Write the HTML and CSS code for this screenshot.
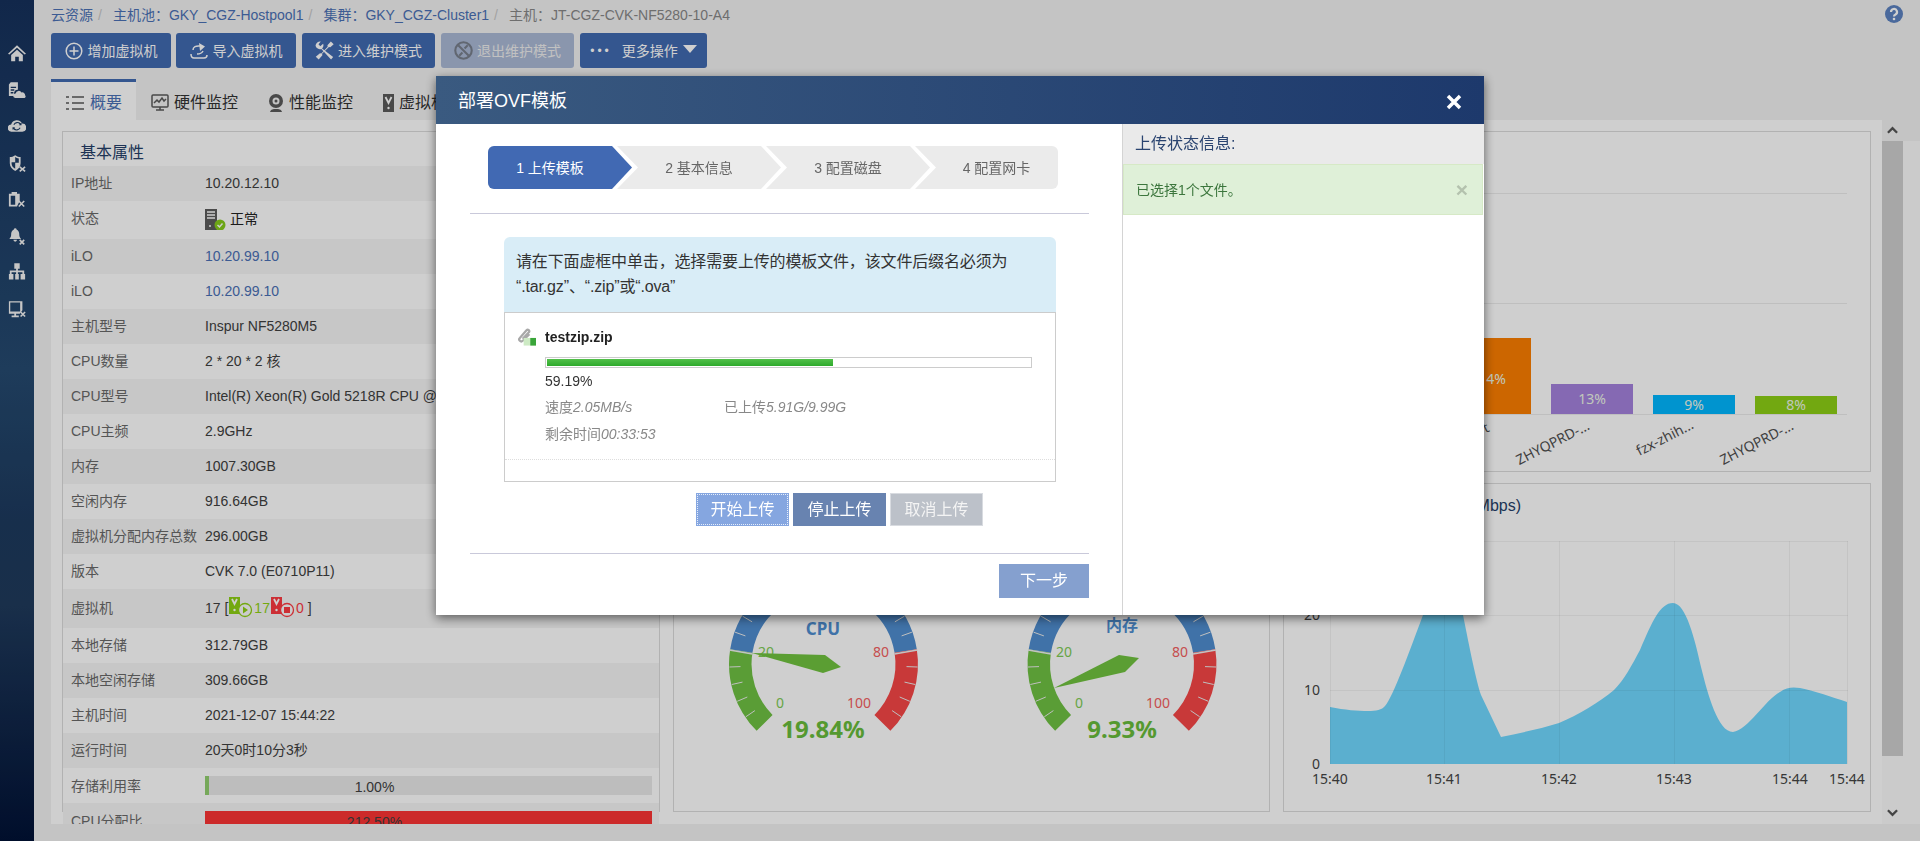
FILE: index.html
```html
<!DOCTYPE html>
<html lang="zh-CN">
<head>
<meta charset="utf-8">
<title>部署OVF模板</title>
<link rel="stylesheet" href="styles.css">
</head>
<body>
<div class="page">
  <aside class="sidebar">
    <svg class="side-icon" viewBox="0 0 20 20"><path d="M0 10.500 10 1l10 9.500-1.500 1L10 4 1.500 11.500zM3.500 12 10 6l6.500 6v7H12v-5H8v5H3.500z"/></svg>
    <svg class="side-icon" viewBox="0 0 20 20"><path d="M1 3.500 3 1h8v8.500a4 4 0 0 0-3 7H1zM3 6v1.500h6V6zm0 3v1.500h4V9zm0 3v1.500h3V12z"/><path d="M8 18.500a2.500 2.500 0 0 1 .5-5 3.500 3.500 0 0 1 6.500-1 3 3 0 0 1 4 3 2 2 0 0 1-.5 3z"/></svg>
    <svg class="side-icon" viewBox="0 0 20 20"><path fill-rule="evenodd" d="M4 16a4 4 0 0 1-.5-8A6.500 6.500 0 0 1 15.500 7 4.500 4.500 0 0 1 16 16zM7 8.500a3.500 3.500 0 0 1 6-.5l-1 1h3V6l-1 .8A5 5 0 0 0 6 8zm6 3a3.500 3.500 0 0 1-6 .5l1-1H5v3l1-.8a5 5 0 0 0 8-1.200z"/></svg>
    <svg class="side-icon" viewBox="0 0 20 20"><path fill-rule="evenodd" d="M8 1c2 1.500 4 2 6 2v7c0 4-2.500 6.500-6 8.500C4.500 16.500 2 14 2 10V3c2 0 4-.5 6-2zM8 3v6H4v1.500c.2 2.500 1.600 4.300 4 5.700V9.500h4V4.600C10.500 4.500 9.200 3.900 8 3z"/><path class="side-x" d="m13 14 6 5m0-5-6 5"/></svg>
    <svg class="side-icon" viewBox="0 0 20 20"><path fill-rule="evenodd" d="M1 4h3V2h6v2h3v8l-3 6H1zm2 2v10h5V6z"/><path class="side-x" d="m12 12 6 6m0-6-6 6"/></svg>
    <svg class="side-icon" viewBox="0 0 20 20"><path d="M8 1a1.500 1.500 0 0 1 1.500 1.500C12 3.500 12.500 6 12.500 8c0 2.500.8 3.500 2 5H1.500c1.200-1.500 2-2.500 2-5 0-2 .5-4.500 3-5.500A1.500 1.500 0 0 1 8 1zM6 14h4a2 2 0 0 1-4 0z"/><path class="side-x" d="m13 14 5 5m0-5-5 5"/></svg>
    <svg class="side-icon" viewBox="0 0 20 20"><path d="M7 0h6v6h-2v2h7v4h1v6h-5v-6h2v-2h-5v2h1v6H8v-6h1v-2H4v2h2v6H1v-6h1V8h7V6H7z"/></svg>
    <svg class="side-icon" viewBox="0 0 20 20"><path fill-rule="evenodd" d="M1 1h15v10l-3 4H9v2h3v2H4v-2h3v-2H1zm1.500 1.500v10h11v-10z"/><path class="side-x" d="m14 13 5 5m0-5-5 5"/></svg>
  </aside>

  <main class="content">
    <div class="topline">
      <nav class="crumbs">
        <span>云资源</span><i>/</i><span>主机池&#xFF1A;GKY_CGZ-Hostpool1</span><i>/</i><span>集群&#xFF1A;GKY_CGZ-Cluster1</span><i>/</i><span class="crumb-current">主机&#xFF1A;JT-CGZ-CVK-NF5280-10-A4</span>
      </nav>
      <svg class="help" viewBox="0 0 18 18"><circle cx="9" cy="9" r="9"/><path class="help-q" d="M6 7a3 3 0 1 1 4.500 2.500C9.500 10 9 10.500 9 11.500"/><circle class="help-dot" cx="9" cy="14" r="1.300"/></svg>
    </div>

    <div class="toolbar">
      <button class="tool tool-a"><svg class="tool-icon" viewBox="0 0 18 18"><circle class="ln" cx="9" cy="9" r="7.800"/><path class="ln" d="M9 4.500v9M4.500 9h9"/></svg>增加虚拟机</button>
      <button class="tool tool-a"><svg class="tool-icon" viewBox="0 0 18 18"><path class="ln" d="M1 12c0 3 1 4 3 4h10c2 0 3-1 3-3"/><path class="ln" d="M3 8c0-3 3-4.500 7-4"/><path d="M9 1l6 3.500L10 9z" fill="#fff"/><path class="ln" d="M7 12c3 0 5-1 6-3"/></svg>导入虚拟机</button>
      <button class="tool tool-b"><svg class="tool-icon tool-icon-lg" viewBox="0 0 18 18"><path d="M.5 4.500A4.300 4.300 0 0 1 5.500.5L3.300 3 5 5l2.700-2.300a4.300 4.300 0 0 1-1 4.500l10.500 8-2 2.300-9.200-10A4.300 4.300 0 0 1 .5 4.500z" fill="#fff"/><path d="M15 .5l2.700 2.500-3.200 3-1.300-.3L6.700 12l.3 1.500L3.500 17.500.7 15l4-3.500 1.300.4 6-6.400-.2-1.400z" fill="#fff"/></svg>进入维护模式</button>
      <button class="tool tool-b tool-off"><svg class="tool-icon tool-icon-lg" viewBox="0 0 18 18"><circle class="ln-off" cx="9" cy="9" r="7.800"/><path class="ln-off" d="M4 4l10 10M13 4l-3 3M5 14l3-3"/></svg>退出维护模式</button>
      <button class="tool tool-c"><span class="dots">•••</span>更多操作<span class="caret"></span></button>
    </div>

    <div class="tabs">
      <div class="tab tab-on"><svg class="tab-icon" viewBox="0 0 18 16"><path class="tab-ln" d="M0 2h3M6 2h12M0 8h3M6 8h12M0 14h3M6 14h12"/></svg>概要</div>
      <div class="tab"><svg class="tab-icon" viewBox="0 0 18 18"><rect x="1" y="1" width="16" height="12" rx="1" class="tab-ln2"/><path class="tab-ln2" d="M3 9l3-3 2 2 3-4 2 3 2-2M5 16h8M9 13v3"/></svg>硬件监控</div>
      <div class="tab"><svg class="tab-icon tab-icon-cam" viewBox="0 0 16 18"><circle cx="8" cy="7" r="7" fill="#5a5a5a"/><circle cx="8" cy="7" r="3.500" fill="#f2f2f2"/><circle cx="8" cy="7" r="1.500" fill="#5a5a5a"/><path d="M2 18c1-3 3-3 6-3s5 0 6 3z" fill="#5a5a5a"/></svg>性能监控</div>
      <div class="tab"><svg class="tab-icon tab-icon-vm" viewBox="0 0 11 18"><rect width="11" height="18" fill="#5a5a5a"/><path d="M2.500 3l3 6 3-6" fill="none" stroke="#fff" stroke-width="1.800"/><circle cx="5.500" cy="14" r="1.200" fill="#fff"/></svg>虚拟机</div>
    </div>

    <div class="workspace">
      <section class="panel">
        <div class="card card-props">
          <h3 class="card-title">基本属性</h3>
          <div class="row"><span class="k">IP地址</span><span class="v">10.20.12.10</span></div>
          <div class="row row-tall"><span class="k k-up">状态</span><span class="v v-state"><svg class="state-icon" viewBox="0 0 21 21"><path d="M0 0h12v21H0z" fill="#5d5d5d"/><path d="M2 3h8M2 6h8M2 9h8" stroke="#fff" stroke-width="1.500"/><circle cx="5" cy="17" r="1" fill="#fff"/><circle cx="15" cy="16" r="5.500" fill="#86cc1c"/><path d="M12.500 16l2 2 3-3.500" stroke="#fff" stroke-width="1.500" fill="none"/></svg>正常</span></div>
          <div class="row"><span class="k">iLO</span><span class="v v-link">10.20.99.10</span></div>
          <div class="row"><span class="k">iLO</span><span class="v v-link">10.20.99.10</span></div>
          <div class="row"><span class="k">主机型号</span><span class="v">Inspur NF5280M5</span></div>
          <div class="row"><span class="k">CPU数量</span><span class="v">2 * 20 * 2 核</span></div>
          <div class="row"><span class="k">CPU型号</span><span class="v">Intel(R) Xeon(R) Gold 5218R CPU @ 2.10GHz</span></div>
          <div class="row"><span class="k">CPU主频</span><span class="v">2.9GHz</span></div>
          <div class="row"><span class="k">内存</span><span class="v">1007.30GB</span></div>
          <div class="row"><span class="k">空闲内存</span><span class="v">916.64GB</span></div>
          <div class="row"><span class="k">虚拟机分配内存总数</span><span class="v">296.00GB</span></div>
          <div class="row"><span class="k">版本</span><span class="v">CVK 7.0 (E0710P11)</span></div>
          <div class="row row-tall2"><span class="k">虚拟机</span><span class="v v-vms">17 [<svg class="vm-icon" viewBox="0 0 24 21"><rect width="11" height="17" fill="#8ed014"/><path d="M3 2l2.500 5L8 2" stroke="#fff" stroke-width="1.800" fill="none"/><circle cx="5.500" cy="13" r="1.200" fill="#fff"/><circle cx="16" cy="13" r="6.500" fill="#fbfbfb" stroke="#8ed014" stroke-width="1.300"/><path d="M14 9.500v7l5-3.500z" fill="#8ed014"/></svg><em class="vm-on">17</em><svg class="vm-icon" viewBox="0 0 24 21"><rect width="11" height="17" fill="#fc3a42"/><path d="M3 2l2.500 5L8 2" stroke="#fff" stroke-width="1.800" fill="none"/><circle cx="5.500" cy="13" r="1.200" fill="#fff"/><circle cx="16" cy="13" r="6.500" fill="#fbfbfb" stroke="#fc3a42" stroke-width="1.300"/><rect x="13" y="10" width="6" height="6" fill="#fc3a42"/></svg><em class="vm-off">0</em>]</span></div>
          <div class="row"><span class="k">本地存储</span><span class="v">312.79GB</span></div>
          <div class="row"><span class="k">本地空闲存储</span><span class="v">309.66GB</span></div>
          <div class="row"><span class="k">主机时间</span><span class="v">2021-12-07 15:44:22</span></div>
          <div class="row"><span class="k">运行时间</span><span class="v">20天0时10分3秒</span></div>
          <div class="row row-meter"><span class="k">存储利用率</span><div class="meter"><div class="meter-fill meter-ok" style="width:1%"></div><span class="meter-text">1.00%</span></div></div>
          <div class="row row-meter"><span class="k">CPU分配比</span><div class="meter"><div class="meter-fill meter-bad" style="width:100%"></div><span class="meter-text">212.50%</span></div></div>
        </div>

        <div class="charts">
          <div class="card card-bars">
            <svg class="chart" viewBox="674 132 1196 339">
              <path class="grid-soft" d="M1100 193.500h747M1100 303.500h747"/>
              <rect x="1100" y="338" width="431" height="76" fill="#fc7e00"/>
              <rect x="1551" y="384" width="82" height="30" fill="#a482dd"/>
              <rect x="1653" y="395" width="82" height="19" fill="#00b7ff"/>
              <rect x="1755" y="396" width="82" height="18" fill="#8dcf16"/>
              <path class="grid-soft" d="M1100 414.500h747"/>
              <text class="bar-val" x="1492" y="384">14%</text>
              <text class="bar-val" x="1592" y="404">13%</text>
              <text class="bar-val" x="1694" y="410">9%</text>
              <text class="bar-val" x="1796" y="410">8%</text>
              <text class="bar-name" transform="translate(1488 432) rotate(-27)">t</text>
              <text class="bar-name" transform="translate(1555 447) rotate(-27)">ZHYQPRD-...</text>
              <text class="bar-name" transform="translate(1667 442) rotate(-27)">fzx-zhih...</text>
              <text class="bar-name" transform="translate(1759 447) rotate(-27)">ZHYQPRD-...</text>
            </svg>
          </div>
          <div class="charts-row">
            <div class="card card-gauges">
              <svg class="chart" viewBox="674 484 595 327">
                <defs>
                  <path id="gauge-ticks" d="M-77.700 52.800-68.600 46.600M-86.300 37.300-76.200 33M-91.700 20.500-81 18.100M-94 3-83 2.600M-88.400-31.800-78.100-28.100M-80.900-47.800-71.400-42.200"/>
                </defs>
                <g class="band">
                  <path class="band-g" d="M764.600 722.900A83.250 83.250 0 0 1 741.300 651"/>
                  <path class="band-b" d="M741.300 651A83.250 83.250 0 0 1 905.700 651"/>
                  <path class="band-r" d="M905.700 651A83.250 83.250 0 0 1 882.400 722.900"/>
                  <path class="band-g" d="M1063.100 722.900A83.250 83.250 0 0 1 1039.800 651"/>
                  <path class="band-b" d="M1039.800 651A83.250 83.250 0 0 1 1204.200 651"/>
                  <path class="band-r" d="M1204.200 651A83.250 83.250 0 0 1 1180.900 722.900"/>
                  <path class="band-gap" d="M729.500 650l23 4M917.500 650l-23 4M1028 650l23 4M1216 650l-23 4"/>
                </g>
                <g class="ticks">
                  <use href="#gauge-ticks" transform="translate(823.500 664)"/>
                  <use href="#gauge-ticks" transform="translate(823.500 664) scale(-1 1)"/>
                  <use href="#gauge-ticks" transform="translate(1122 664)"/>
                  <use href="#gauge-ticks" transform="translate(1122 664) scale(-1 1)"/>
                </g>
                <text class="g-title" x="823" y="635">CPU</text>
                <text class="g-title g-title-cn" x="1122" y="631">内存</text>
                <text class="g-lab g-green" x="766" y="657">20</text>
                <text class="g-lab g-red" x="881" y="657">80</text>
                <text class="g-lab g-green" x="780" y="708">0</text>
                <text class="g-lab g-red" x="859" y="708">100</text>
                <text class="g-lab g-green" x="1064" y="657">20</text>
                <text class="g-lab g-red" x="1180" y="657">80</text>
                <text class="g-lab g-green" x="1079" y="708">0</text>
                <text class="g-lab g-red" x="1158" y="708">100</text>
                <path class="needle" d="M752 653 825 655 841 667 823 673z"/>
                <path class="needle" d="M1054 688 1119 655 1139 658 1125 672z"/>
                <text class="g-val" x="823" y="738">19.84%</text>
                <text class="g-val" x="1122" y="738">9.33%</text>
              </svg>
            </div>
            <div class="card card-area">
              <svg class="chart" viewBox="1284 484 586 327">
                <text class="area-title" x="1521" y="511" text-anchor="end">(Mbps)</text>
                <path class="area" d="M1330 764V707C1345 710 1358 711 1368 711 1376 711 1382 710 1385 706 1393 697 1410 650 1423 615 1432 580 1438 530 1443 515 1450 530 1457 590 1463 615 1470 650 1476 680 1481 695L1501 737C1520 733 1540 729 1559 723 1578 715 1600 702 1614 690 1624 680 1632 665 1640 650 1652 622 1660 603 1673 603 1686 603 1695 640 1701 667 1708 695 1718 732 1733 732 1748 730 1765 700 1780 692 1787 687 1793 687 1800 688 1815 691 1832 697 1847 702V764z"/>
                <path class="grid" d="M1330.500 541v223M1444.500 541v223M1559.500 541v223M1674.500 541v223M1789.500 541v223M1847.500 541v223M1330 541.500h518M1330 615.500h518M1330 690.500h518"/>
                <text class="ax ax-r" x="1320" y="620">20</text>
                <text class="ax ax-r" x="1320" y="695">10</text>
                <text class="ax ax-r" x="1320" y="769">0</text>
                <text class="ax" x="1330" y="784">15:40</text>
                <text class="ax" x="1444" y="784">15:41</text>
                <text class="ax" x="1559" y="784">15:42</text>
                <text class="ax" x="1674" y="784">15:43</text>
                <text class="ax" x="1790" y="784">15:44</text>
                <text class="ax" x="1847" y="784">15:44</text>
              </svg>
            </div>
          </div>
        </div>
      </section>
      <div class="scrollbar">
        <div class="sb-up"><svg class="sb-arrow" viewBox="0 0 12 8"><path d="M1 7l5-5 5 5"/></svg></div>
        <div class="sb-rail">
          <div class="sb-thumb"></div>
          <svg class="sb-arrow sb-down" viewBox="0 0 12 8"><path d="M1 1l5 5 5-5"/></svg>
        </div>
      </div>
    </div>
  </main>
</div>

<div class="overlay"></div>

<div class="modal">
  <header class="modal-head">
    <h2 class="modal-title">部署OVF模板</h2>
    <svg class="modal-close" viewBox="0 0 16 16"><path d="M2 2l12 12M14 2L2 14"/></svg>
  </header>
  <div class="modal-body">
    <div class="wizard">
      <ol class="steps">
        <li class="step step-on">1 上传模板</li>
        <li class="step">2 基本信息</li>
        <li class="step">3 配置磁盘</li>
        <li class="step step-last">4 配置网卡</li>
      </ol>
      <hr class="rule rule-top">
      <div class="hint">请在下面虚框中单击&#xFF0C;选择需要上传的模板文件&#xFF0C;该文件后缀名必须为<br>“.tar.gz”、“.zip”或“.ova”</div>
      <div class="upload">
        <div class="file">
          <svg class="file-icon" viewBox="0 0 20 18"><path d="M13 6 6 13c-2 2-5-1-3-3l7-8c1.500-1.500 4 .5 2.500 2L6 11" fill="none" stroke="#a8a8a8" stroke-width="2.400"/><rect x="7" y="10" width="13" height="8" fill="#cdeac4"/><rect x="14" y="10" width="6" height="8" fill="#3aa53a"/></svg>
          <b class="file-name">testzip.zip</b>
        </div>
        <div class="bar"><div class="bar-fill" style="width:59.19%"></div></div>
        <div class="pct">59.19%</div>
        <div class="stats"><span class="stat-a">速度<i>2.05MB/s</i></span><span>已上传<i>5.91G/9.99G</i></span></div>
        <div class="stats stats-b"><span>剩余时间<i>00:33:53</i></span></div>
        <div class="dotted"></div>
      </div>
      <div class="actions">
        <button class="act act-start">开始上传</button>
        <button class="act act-stop">停止上传</button>
        <button class="act act-cancel">取消上传</button>
      </div>
      <hr class="rule rule-bottom">
      <div class="next-wrap"><button class="next">下一步</button></div>
    </div>
    <aside class="status">
      <div class="status-head">上传状态信息:</div>
      <div class="alert"><span>已选择1个文件。</span><b class="alert-x">×</b></div>
    </aside>
  </div>
</div>
</body>
</html>
```

FILE: styles.css
```css
* { box-sizing: border-box; }
html, body { margin: 0; height: 100%; overflow: hidden; }
body {
  background: #f2f2f2;
  color: #404040;
  font: 14px/20px "Liberation Sans", "Noto Sans CJK SC", sans-serif;
}
button { font: inherit; border: 0; padding: 0; }
i { font-style: italic; }

.page { display: flex; height: 841px; }

/* sidebar */
.sidebar {
  flex: 0 0 34px;
  display: flex;
  flex-direction: column;
  align-items: center;
  gap: 18px;
  padding-top: 44px;
  background: linear-gradient(#16315c 0, #254a70 44%, #1d3a5e 62%, #1f3a5c 72%, #011236 100%);
}
.side-icon { width: 18px; height: 18.500px; fill: #f4f4f4; flex: none; }
.side-x { fill: none; stroke: #f4f4f4; stroke-width: 1.800; }

/* content */
.content { flex: 1; min-width: 0; display: flex; flex-direction: column; padding-left: 17px; }
.topline { height: 33px; display: flex; align-items: flex-start; justify-content: space-between; padding: 5px 17px 0 0; }
.crumbs { display: flex; align-items: center; color: #4a70b5; }
.crumbs i { color: #c8c8c8; margin: 0 11px 0 5px; font-style: normal; }
.crumb-current { color: #888; }
.help { width: 18px; height: 18px; margin-top: 0; fill: #5c82c0; }
.help-q { fill: none; stroke: #fff; stroke-width: 2.200; }
.help-dot { fill: #fff; }

.toolbar { display: flex; gap: 5px; height: 35px; }
.tool {
  display: flex;
  align-items: center;
  justify-content: center;
  gap: 5px;
  height: 35px;
  background: #416ab0;
  color: #fff;
  border-radius: 3px;
}
.tool-a { width: 120px; }
.tool-b { width: 133px; gap: 4px; }
.tool-b:nth-child(3) { margin-left: 1px; }
.tool-b.tool-off { margin-left: 1px; }
.tool-c { width: 127px; gap: 10px; margin-left: 1px; }
.tool-off { background: #aab9d6; color: #eee; }
.tool-icon { width: 18px; height: 18px; flex: none; }
.tool-icon-lg { width: 19px; height: 19px; }
.ln { fill: none; stroke: #fff; stroke-width: 1.500; }
.ln-off { fill: none; stroke: #787f8c; stroke-width: 2; }
.dots { letter-spacing: 3px; font-size: 12px; }
.caret { border: 7px solid transparent; border-top: 8px solid #fff; border-bottom: 0; margin-left: -5px; margin-top: -3px; }

.tabs { display: flex; height: 41px; margin-top: 11px; font-size: 16px; white-space: nowrap; }
.tab { display: flex; align-items: center; gap: 5px; padding: 7px 15px 0; color: #333; }
.tab-on { width: 85px; background: #fff; border-top: 3px solid #416ab0; color: #4a70b5; padding: 3px 0 0 15px; gap: 6px; }
.tab-icon { width: 18px; height: 18px; flex: none; }
.tab-icon-cam { width: 16px; }
.tab-icon-vm { width: 11px; }
.tab-ln { fill: none; stroke: #5a5a5a; stroke-width: 1.400; }
.tab-ln2 { fill: none; stroke: #5a5a5a; stroke-width: 1.500; }

.workspace { flex: 0 0 704px; display: flex; }
.panel { flex: 0 0 1831px; background: #fff; padding: 11px 12px 0 11px; display: flex; gap: 13px; overflow: hidden; }
.card { border: 1px solid #dcdcdc; }
.card-props { flex: 0 0 598px; height: 681px; }
.card-title { margin: 0; height: 34px; font: 16px/41px "Liberation Sans", "Noto Sans CJK SC", sans-serif; padding-left: 17px; color: #263f69; }
.row { display: flex; align-items: center; height: 35px; padding: 0 0 2px 8px; color: #404040; background: #fff; }
.row:nth-of-type(odd) { background: #f5f5f5; }
.row-tall { height: 38px; }
.row-tall2 { height: 39px; }
.row-meter { padding-bottom: 0; }
.k { flex: 0 0 134px; color: #696969; }
.k-up { margin-top: -3px; }
.v-link { color: #4a70b5; }
.v-state { display: flex; align-items: center; gap: 4px; color: #222; }
.state-icon { width: 21px; height: 21px; margin-top: 1px; }
.v-vms { display: flex; align-items: center; white-space: pre; }
.vm-icon { width: 24px; height: 21px; margin: 0 1px; }
.vm-on { font-style: normal; color: #8ed014; }
.vm-off { font-style: normal; color: #fc3a42; margin-right: 4px; }
.meter { flex: 0 0 447px; height: 19px; background: #e9e9e9; display: flex; align-items: center; justify-content: center; padding-right: 108px; position: relative; }
.meter-fill { position: absolute; left: 0; top: 0; bottom: 0; }
.meter-ok { background: #92cf6f; }
.meter-bad { background: #fc3434; }
.meter-text { position: relative; color: #404040; margin-top: 2px; }

.charts { flex: 0 0 1198px; display: flex; flex-direction: column; gap: 11px; height: 681px; }
.card-bars { height: 341px; }
.charts-row { display: flex; gap: 13px; height: 329px; }
.card-gauges { flex: 0 0 597px; }
.card-area { flex: 0 0 588px; }
.chart { display: block; width: 100%; height: 100%; }
.grid-soft { fill: none; stroke: #ececec; stroke-width: 1; }
.bar-val { font: 14px "Noto Sans", sans-serif; fill: #eef6e8; text-anchor: middle; }
.bar-name { font: 14px "Noto Sans", sans-serif; fill: #4e4e4e; text-anchor: middle; }
.band path { fill: none; stroke-width: 22.500; }
.band .band-g { stroke: #6fc243; }
.band .band-b { stroke: #4f8dcf; }
.band .band-r { stroke: #f74747; }
.band .band-gap { stroke: #f0f0f0; stroke-width: 1.500; }
.ticks use { fill: none; stroke: #ececec; stroke-width: 1; }
.g-title { font: 700 17px "Noto Sans", "Noto Sans CJK SC", sans-serif; fill: #4e8dcf; text-anchor: middle; }
.g-title-cn { font-size: 16px; }
.g-lab { font: 14px "Noto Sans", sans-serif; text-anchor: middle; }
.g-green { fill: #80cc55; }
.g-red { fill: #f46060; }
.needle { fill: #70c33f; }
.g-val { font: 700 24px "Noto Sans", sans-serif; fill: #69bd3c; text-anchor: middle; }
.area-title { font: 16px "Liberation Sans", sans-serif; fill: #263f69; }
.area { fill: #71d8ff; }
.grid { fill: none; stroke: #000; stroke-opacity: .05; }
.ax { font: 14px "Noto Sans", sans-serif; fill: #444; text-anchor: middle; }
.ax-r { text-anchor: end; }

.scrollbar { flex: 1; display: flex; flex-direction: column; }
.sb-up { height: 21px; padding-left: 5px; }
.sb-rail { flex: 1; background: #fbfbfb; display: flex; flex-direction: column; }
.sb-thumb { width: 21px; height: 615px; background: #cecece; }
.sb-arrow { display: block; width: 11px; height: 8px; fill: none; stroke: #555; stroke-width: 2.500; margin-top: 6px; }
.sb-down { margin: 53px 0 0 5px; }

/* dim + modal */
.overlay { position: fixed; inset: 0; background: rgba(0, 0, 0, .19); }
.modal {
  position: fixed;
  left: 436px;
  top: 76px;
  width: 1048px;
  height: 539px;
  background: #fff;
  box-shadow: 0 3px 10px rgba(0, 0, 0, .55);
  display: flex;
  flex-direction: column;
}
.modal-head {
  flex: 0 0 48px;
  display: flex;
  align-items: center;
  justify-content: space-between;
  padding: 0 22px 0 22px;
  background: linear-gradient(90deg, #3a5a80, #1d396c);
  color: #fff;
}
.modal-title { margin: 2px 0 0; font: 18px/24px "Liberation Sans", "Noto Sans CJK SC", sans-serif; }
.modal-close { width: 16px; height: 16px; margin-top: 4px; fill: none; stroke: #fff; stroke-width: 3.500; }
.modal-body { flex: 1; display: flex; min-height: 0; }
.wizard { flex: 0 0 687px; border-right: 1px solid #d4d4d4; padding-top: 22px; }
.status { flex: 1; }

.steps { list-style: none; margin: 0 0 0 52px; padding: 0; width: 570px; height: 43px; display: flex; background: #ebebeb; border-radius: 6px; color: #666; }
.step { flex: 0 0 149px; display: flex; align-items: center; justify-content: center; padding-left: 25px; position: relative; }
.step::before, .step::after { content: ""; position: absolute; top: 0; height: 100%; left: 100%; }
.step::after { width: 26px; background: #fff; clip-path: polygon(0 0, 5px 0, 26px 50%, 5px 100%, 0 100%); z-index: 1; }
.step::before { width: 20px; background: #ebebeb; clip-path: polygon(0 0, 100% 50%, 0 100%); z-index: 2; }
.step-on { flex-basis: 124px; padding-left: 0; background: #4169b3; color: #fff; border-radius: 6px 0 0 6px; }
.step-on::before { background: #4169b3; }
.step-last { flex-basis: 148px; }
.step-last::before, .step-last::after { display: none; }

.rule { border: 0; height: 1px; margin: 0 0 0 34px; width: 619px; background: #c9c9da; }
.rule-top { margin-top: 24px; }
.rule-bottom { margin-top: 27px; }
.hint { margin: 23px 0 0 68px; width: 552px; height: 75px; padding: 12px 12px 0; background: #d9edf7; border-radius: 6px 6px 0 0; line-height: 25px; color: #333; font-size: 16px; letter-spacing: -.15px; }
.upload { margin-left: 68px; width: 552px; height: 170px; border: 1px solid #ccc; padding-top: 12px; }
.file { display: flex; align-items: center; height: 24px; padding-left: 12px; gap: 9px; }
.file-icon { width: 19px; height: 18px; }
.file-name { color: #222; }
.bar { margin: 8px 0 0 40px; width: 487px; height: 11px; border: 1px solid #ccc; padding: 1px; }
.bar-fill { height: 100%; background: linear-gradient(#52c04a, #2eaa2c); }
.pct { margin: 3px 0 0 40px; color: #333; }
.stats { display: flex; margin: 6px 0 0 40px; color: #888; }
.stats-b { margin-top: 7px; }
.stat-a { flex: 0 0 179px; }
.dotted { margin-top: 15px; border-top: 1px dotted #ddd; }
.actions { display: flex; gap: 4px; margin: 11px 0 0 260px; }
.act { width: 93px; height: 33px; color: #fff; font-size: 16px; }
.act-start { background: #85a6e0; outline: 1px dotted #e6eefb; outline-offset: -2px; }
.act-stop { background: #6883b0; }
.act-cancel { background: #bcc1c9; border: 1px solid #d8dbe0; color: #f4f4f4; }
.next-wrap { display: flex; justify-content: flex-end; margin: 10px 33px 0 0; }
.next { width: 90px; height: 34px; background: #85a0cf; color: #fff; font-size: 16px; }

.status-head { height: 40px; padding: 0 12px; display: flex; align-items: center; background: #eaeaea; color: #2a4470; font-size: 16px; }
.alert { height: 51px; display: flex; align-items: center; justify-content: space-between; padding: 0 12px; margin-right: 1px; background: #dff0d8; border: 1px solid #d6e9c6; color: #3c763d; }
.alert-x { font-size: 21px; color: #b4c2ae; margin-right: 2px; }
```
